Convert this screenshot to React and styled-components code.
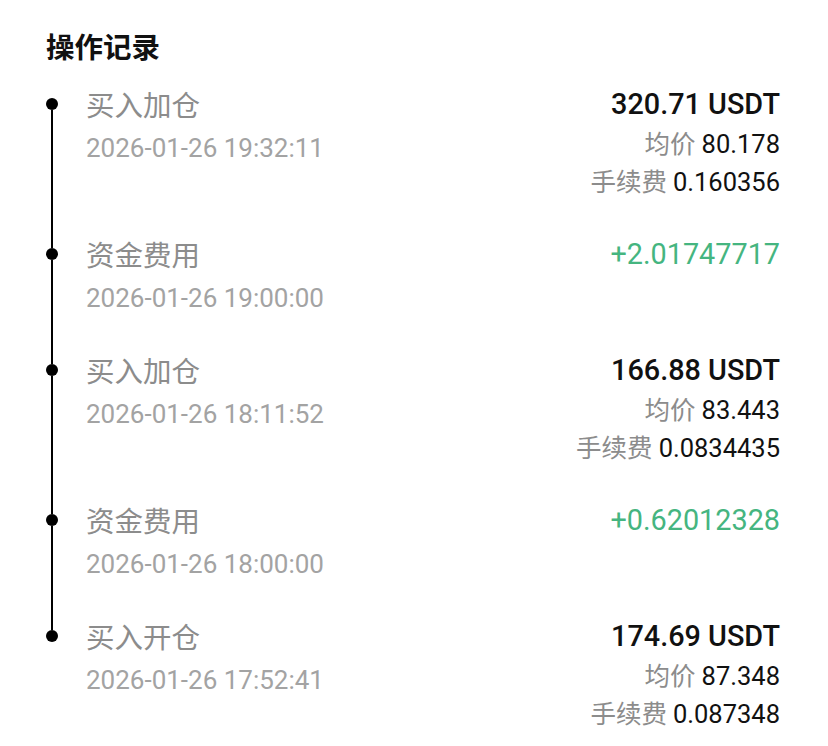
import React from "react";
import styled, { createGlobalStyle } from "styled-components";

const Global = createGlobalStyle`
  html, body { margin: 0; padding: 0; background: #ffffff; }
  body { font-family: Roboto, "Noto Sans CJK SC", sans-serif; -webkit-font-smoothing: antialiased; }
`;

const Page = styled.div`
  box-sizing: border-box;
  width: 828px;
  min-height: 746px;
  padding: 26px 48px 0 46px;
  background: #fff;
`;

const Title = styled.h2`
  margin: 0 0 19px 0;
  font-family: "Noto Sans CJK SC", sans-serif;
  font-size: 28.5px;
  line-height: 40px;
  font-weight: 700;
  color: #111;
`;

const List = styled.div`
  display: flex;
  flex-direction: column;
`;

const Row = styled.div`
  display: flex;
  align-items: stretch;
  gap: 28px;
`;

const Marker = styled.div`
  width: 12px;
  flex: none;
  display: flex;
  flex-direction: column;
  align-items: center;
`;

const Segment = styled.div`
  width: 2px;
  background: ${(p) => (p.$hidden ? "transparent" : "#000")};
  height: ${(p) => (p.$grow ? "auto" : "13px")};
  flex: ${(p) => (p.$grow ? "1" : "none")};
`;

const Dot = styled.div`
  width: 12px;
  height: 12px;
  border-radius: 50%;
  background: #000;
  flex: none;
`;

const Body = styled.div`
  flex: 1;
  display: flex;
  justify-content: space-between;
  align-items: flex-start;
  padding-bottom: ${(p) => (p.$last ? "0" : "36px")};
`;

const Left = styled.div`
  display: flex;
  flex-direction: column;
`;

const Label = styled.div`
  font-family: "Noto Sans CJK SC", sans-serif;
  font-size: 28.5px;
  line-height: 38px;
  height: 38px;
  color: #8c8c8c;
`;

const Time = styled.div`
  margin-top: 8px;
  font-family: Roboto, sans-serif;
  font-size: 26px;
  line-height: 34px;
  height: 34px;
  color: #a3a3a3;
`;

const Right = styled.div`
  display: flex;
  flex-direction: column;
  align-items: flex-end;
`;

const Amount = styled.div`
  font-family: Roboto, sans-serif;
  font-size: 28.8px;
  line-height: 38px;
  height: 38px;
  font-weight: ${(p) => (p.$green ? 400 : 500)};
  color: ${(p) => (p.$green ? "#45b580" : "#111")};
`;

const Detail = styled.div`
  display: flex;
  align-items: baseline;
  justify-content: flex-end;
  gap: 6px;
  height: 38px;
  font-size: 25.5px;
  line-height: 38px;
`;

const DetailKey = styled.span`
  font-family: "Noto Sans CJK SC", sans-serif;
  color: #8c8c8c;
`;

const DetailValue = styled.span`
  font-family: Roboto, sans-serif;
  color: #111;
`;

const records = [
  { label: "买入加仓", time: "2026-01-26 19:32:11", amount: "320.71 USDT", avg: "80.178", fee: "0.160356" },
  { label: "资金费用", time: "2026-01-26 19:00:00", amount: "+2.01747717", green: true },
  { label: "买入加仓", time: "2026-01-26 18:11:52", amount: "166.88 USDT", avg: "83.443", fee: "0.0834435" },
  { label: "资金费用", time: "2026-01-26 18:00:00", amount: "+0.62012328", green: true },
  { label: "买入开仓", time: "2026-01-26 17:52:41", amount: "174.69 USDT", avg: "87.348", fee: "0.087348" },
];

export default function App() {
  return (
    <Page>
      <Global />
      <Title>操作记录</Title>
      <List>
        {records.map((r, i) => {
          const first = i === 0;
          const last = i === records.length - 1;
          return (
            <Row key={i}>
              <Marker>
                <Segment $hidden={first} />
                <Dot />
                <Segment $grow $hidden={last} />
              </Marker>
              <Body $last={last}>
                <Left>
                  <Label>{r.label}</Label>
                  <Time>{r.time}</Time>
                </Left>
                <Right>
                  <Amount $green={r.green}>{r.amount}</Amount>
                  {r.avg && (
                    <Detail>
                      <DetailKey>均价</DetailKey>
                      <DetailValue>{r.avg}</DetailValue>
                    </Detail>
                  )}
                  {r.fee && (
                    <Detail>
                      <DetailKey>手续费</DetailKey>
                      <DetailValue>{r.fee}</DetailValue>
                    </Detail>
                  )}
                </Right>
              </Body>
            </Row>
          );
        })}
      </List>
    </Page>
  );
}
